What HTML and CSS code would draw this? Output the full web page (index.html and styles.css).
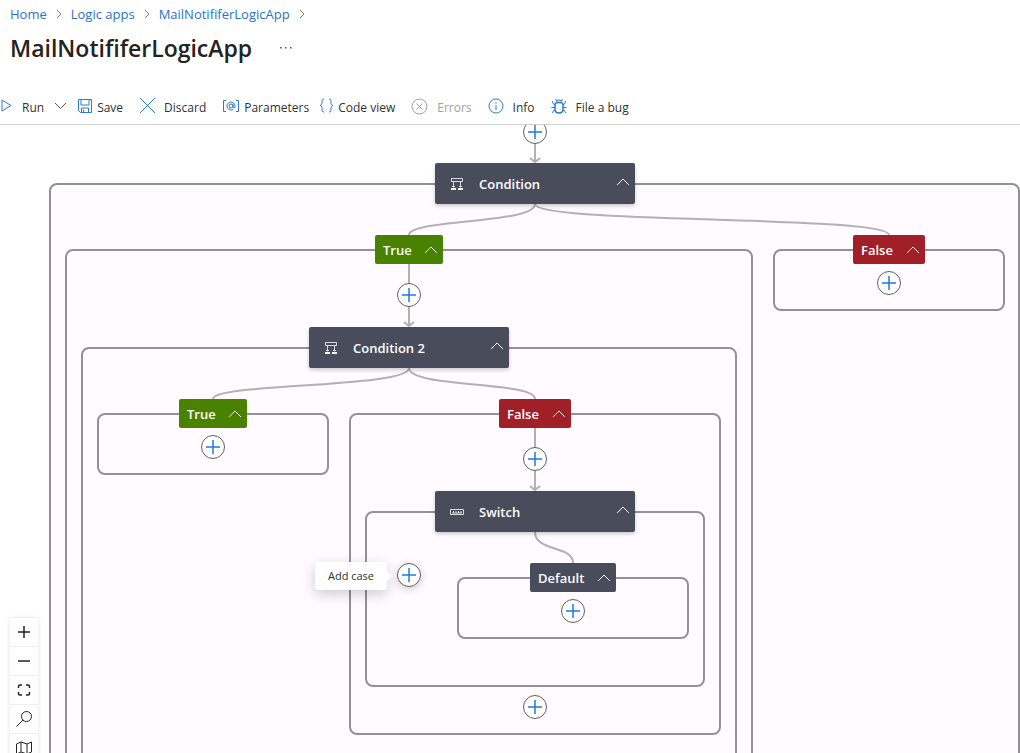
FILE: index.html
```html
<!DOCTYPE html>
<html lang="en">
<head>
<meta charset="utf-8">
<title>MailNotififerLogicApp</title>
<link rel="stylesheet" href="styles.css">
</head>
<body>
<svg class="defs" aria-hidden="true">
  <symbol id="crumb" viewBox="0 0 6 10"><path d="M1 1l4 4-4 4"/></symbol>
  <symbol id="up" viewBox="0 0 14 8"><path d="M1 7l6-6 6 6"/></symbol>
  <symbol id="plus" viewBox="0 0 14 14"><path d="M7 0v14M0 7h14"/></symbol>
  <symbol id="branch" viewBox="0 0 14 14"><path d="M1.500 1.500h11v3h-11zM3.500 4.500v6M10.500 4.500v6M2 9.500h3M9 9.500h3"/><path class="solid" d="M1 11h5v2H1zM8 11h5v2H8z"/></symbol>
</svg>
<header class="header">
  <nav class="crumbs" aria-label="Breadcrumb">
    <a href="#">Home</a><svg class="sep"><use href="#crumb"/></svg>
    <a href="#">Logic apps</a><svg class="sep"><use href="#crumb"/></svg>
    <a href="#">MailNotififerLogicApp</a><svg class="sep"><use href="#crumb"/></svg>
  </nav>
  <div class="title-row">
    <h1>MailNotififerLogicApp</h1>
    <button class="more" aria-label="More"><svg width="12" height="2" viewBox="0 0 12 2"><path d="M0 0h1.500v1.500H0zM5 0h1.500v1.500H5zM10 0h1.500v1.500H10z"/></svg></button>
  </div>
</header>
<div class="toolbar" role="toolbar">
  <button class="tool wide"><svg width="12" height="16" viewBox="0 0 12 16"><path d="M2 2v11l9-5.500z"/></svg>Run<svg class="chev" width="13" height="16" viewBox="0 0 13 16"><path d="M1 5l5.500 5.500L12 5"/></svg></button>
  <button class="tool tight near"><svg width="16" height="16" viewBox="0 0 16 16"><path d="M1.500 1.500h13v13h-11l-2-2zM4 1.500v5.500h8V1.500M4.500 14.500V10h7v4.500M6.500 11.500v3"/></svg>Save</button>
  <button class="tool"><svg width="16" height="16" viewBox="0 0 16 16"><path d="M1 0l15 15M16 0L1 15"/></svg>Discard</button>
  <button class="tool tight"><svg width="18" height="16" viewBox="0 0 18 16"><path d="M4 2.500H1.500v11H4M14 2.500h2.500v11H14"/><circle cx="9" cy="8" r="2"/><path d="M11 6v3c0 1.500 2 1.500 2-1A4 4 0 1 0 11 11.500"/></svg>Parameters</button>
  <button class="tool tight near"><svg width="15" height="16" viewBox="0 0 15 16"><path d="M5 1C3 1 3 2 3 4s0 3-2 3.500c2 .5 2 1.500 2 3.500s0 3 2 3M10 1c2 0 2 1 2 3s0 3 2 3.500c-2 .5-2 1.500-2 3.500s0 3-2 3"/></svg>Code view</button>
  <button class="tool" disabled><svg width="17" height="17" viewBox="0 0 17 17"><circle cx="8.500" cy="8.500" r="7.500"/><path d="M5.500 5.500l6 6M11.500 5.500l-6 6"/></svg>Errors</button>
  <button class="tool"><svg width="16" height="16" viewBox="0 0 16 16"><circle cx="8" cy="8" r="7"/><path d="M8 7v5M8 4v1.500"/></svg>Info</button>
  <button class="tool"><svg width="16" height="16" viewBox="0 0 16 16"><path class="heavy" d="M4 6.500Q4 4.500 8 4.500t4 2V11q0 4-4 4t-4-4z"/><path d="M5.500 4.500a2.500 2.500 0 0 1 5 0M4.500 1l1.500 2M11.500 1L10 3M4 7Q1.500 6.500 1.500 3M12 7q2.500-.5 2.500-4M4 9.500H.5M12 9.500h3.500M4 12q-2 0-2.500 3M12 12q2 0 2.500 3"/></svg>File a bug</button>
</div>
<main class="canvas">
  <div class="group g-root"></div>
  <div class="group g-true"></div>
  <div class="group g-false"></div>
  <div class="group g-cond2"></div>
  <div class="group g-true2"></div>
  <div class="group g-false2"></div>
  <div class="group g-switch"></div>
  <div class="group g-default"></div>
  <svg class="edges" width="1020" height="628" viewBox="0 0 1020 628" aria-hidden="true">
    <path d="M535 0v37M409 139v62M535 303v62"/>
    <path d="M530 33l5 4 5-4M404 197l5 4 5-4M530 361l5 4 5-4"/>
    <path d="M535 79C535 99 409 94 409 110M535 79C535 99 889 90 889 110"/>
    <path d="M409 243C409 263 213 258 213 274M409 243C409 263 535 256 535 274"/>
    <path d="M535 407C535 427 573 420 573 438"/>
  </svg>

  <button class="add a1" aria-label="Add action"><svg><use href="#plus"/></svg></button>
  <button class="add a2" aria-label="Add action"><svg><use href="#plus"/></svg></button>
  <button class="add a3" aria-label="Add action"><svg><use href="#plus"/></svg></button>
  <button class="add a4" aria-label="Add action"><svg><use href="#plus"/></svg></button>
  <button class="add a5" aria-label="Add action"><svg><use href="#plus"/></svg></button>
  <button class="add a6" aria-label="Add case"><svg><use href="#plus"/></svg></button>
  <button class="add a7" aria-label="Add action"><svg><use href="#plus"/></svg></button>
  <button class="add a8" aria-label="Add action"><svg><use href="#plus"/></svg></button>

  <div class="card c-cond"><svg class="kind"><use href="#branch"/></svg><span>Condition</span><button class="fold" aria-label="Collapse Condition"><svg class="up"><use href="#up"/></svg></button></div>
  <div class="card c-cond2"><svg class="kind"><use href="#branch"/></svg><span>Condition 2</span><button class="fold" aria-label="Collapse Condition 2"><svg class="up"><use href="#up"/></svg></button></div>
  <div class="card c-switch"><svg class="kind" viewBox="0 0 14 14"><path d="M.5 4.500h13v5H.5zM3.500 6v2M6 6v2M8.500 6v2M11 6v2M2 8h10"/></svg><span>Switch</span><button class="fold" aria-label="Collapse Switch"><svg class="up"><use href="#up"/></svg></button></div>

  <button class="label yes l-true">True<svg class="up"><use href="#up"/></svg></button>
  <button class="label no l-false">False<svg class="up"><use href="#up"/></svg></button>
  <button class="label yes l-true2">True<svg class="up"><use href="#up"/></svg></button>
  <button class="label no l-false2">False<svg class="up"><use href="#up"/></svg></button>
  <button class="label l-default">Default<svg class="up"><use href="#up"/></svg></button>

  <div class="tooltip" role="tooltip">Add case</div>

  <div class="controls">
    <button aria-label="Zoom in"><svg viewBox="0 0 16 16"><path class="bold" d="M8 2v12M2 8h12"/></svg></button>
    <button aria-label="Zoom out"><svg viewBox="0 0 16 16"><path class="bold" d="M2 8h12"/></svg></button>
    <button aria-label="Fit view"><svg viewBox="0 0 16 16"><path class="bold" d="M2.500 6V4.500Q2.500 3 4 3h2M10 3h2q1.500 0 1.500 1.500V6M13.500 10v1.500q0 1.500-1.500 1.500H10M6 13H4q-1.500 0-1.500-1.500V10"/></svg></button>
    <button aria-label="Search"><svg viewBox="0 0 16 16"><circle cx="10.500" cy="5.500" r="5"/><path d="M7 9l-6.500 6.500"/></svg></button>
    <button aria-label="Minimap"><svg viewBox="0 0 16 16"><path d="M.5 4L5 2l6 2 4.500-2v10L11 14l-6-2-4.500 2zM5 2v10M11 4v10"/></svg></button>
  </div>
</main>
</body>
</html>
```
FILE: styles.css
```css
* { box-sizing: border-box; }
body {
  margin: 0;
  height: 100vh;
  display: flex;
  flex-direction: column;
  overflow: hidden;
  background: #fff;
  color: #323130;
  font: 12px/20px "Open Sans", "Noto Sans", sans-serif;
}
button { margin: 0; padding: 0; border: 0; background: none; color: inherit; font: inherit; cursor: pointer; }
svg { fill: none; flex: none; }
.defs { position: absolute; width: 0; height: 0; }

.header { padding: 4px 10px 0; }
.crumbs { display: flex; align-items: center; gap: 9px; font-size: 13px; }
.crumbs a { color: #2b72c4; text-decoration: none; }
.sep { width: 6px; height: 10px; stroke: #777; }
.title-row { display: flex; align-items: center; gap: 28px; height: 47px; }
h1 { margin: 0; font-size: 23px; line-height: 32px; font-weight: 600; color: #242322; }
.more { display: flex; padding: 4px 0; }
.more svg { fill: #555; }

.toolbar { display: flex; align-items: center; gap: 16px; height: 54px; padding-top: 20px; border-bottom: 1px solid #d2d0ce; white-space: nowrap; }
.tool { display: flex; align-items: center; gap: 9px; }
.tool svg { stroke: #2f78d0; margin-bottom: 3px; }
.tool .chev { stroke: #555; }
.tool .heavy { stroke-width: 1.500; }
.wide { gap: 10px; }
.tight { gap: 4px; }
.near { margin-left: -6px; }
.tool:disabled { color: #a19f9d; }
.tool:disabled svg { stroke: #a19f9d; }

.canvas { position: relative; flex: 1; min-height: 0; overflow: hidden; }
.group { position: absolute; border: 2px solid #949196; border-radius: 8px; background: #fffbff; }
.g-root { left: 49px; top: 58px; width: 971px; height: 700px; }
.g-true { left: 65px; top: 124px; width: 688px; height: 600px; }
.g-false { left: 773px; top: 124px; width: 232px; height: 62px; }
.g-cond2 { left: 81px; top: 222px; width: 656px; height: 480px; }
.g-true2 { left: 97px; top: 288px; width: 232px; height: 62px; }
.g-false2 { left: 349px; top: 288px; width: 372px; height: 322px; }
.g-switch { left: 365px; top: 386px; width: 340px; height: 176px; }
.g-default { left: 457px; top: 452px; width: 232px; height: 62px; }
.edges { position: absolute; left: 0; top: 0; stroke: #b3afb5; stroke-width: 2; }

.add { position: absolute; display: grid; place-items: center; width: 24px; height: 24px; border: 1px solid #605e5c; border-radius: 50%; background: #fff; }
.add svg { width: 14px; height: 14px; stroke: #1f7bdc; stroke-width: 1.500; }
.a1 { left: 523px; top: -5px; }
.a2 { left: 397px; top: 158px; }
.a3 { left: 877px; top: 146px; }
.a4 { left: 201px; top: 310px; }
.a5 { left: 523px; top: 322px; }
.a6 { left: 397px; top: 438px; box-shadow: 0 2px 8px #0003; }
.a7 { left: 561px; top: 474px; }
.a8 { left: 523px; top: 570px; }

.card { position: absolute; display: flex; align-items: center; gap: 15px; width: 200px; height: 41px; padding-left: 15px; border-radius: 2px; background: #484c5b; color: #fff; font-size: 13px; font-weight: 600; box-shadow: 0 2px 4px #0003; }
.kind { width: 14px; height: 14px; stroke: #d8d9de; }
.solid { fill: #fff; stroke: none; }
.fold { display: flex; margin-left: auto; padding: 4px 5px 8px; }
.up { width: 14px; height: 8px; stroke: #fff; stroke-width: 1; }
.c-cond { left: 435px; top: 38px; }
.c-cond2 { left: 309px; top: 202px; }
.c-switch { left: 435px; top: 366px; }

.label { position: absolute; display: flex; align-items: center; justify-content: space-between; height: 29px; padding: 0 5px 0 8px; border-radius: 2px; background: #484c5b; color: #fff; font-size: 13px; font-weight: 600; }
.yes { width: 68px; background: #488200; }
.no { width: 72px; background: #a12027; }
.l-true { left: 375px; top: 110px; }
.l-false { left: 853px; top: 110px; }
.l-true2 { left: 179px; top: 274px; }
.l-false2 { left: 499px; top: 274px; }
.l-default { left: 530px; top: 438px; width: 86px; }

.tooltip { position: absolute; left: 315px; top: 437px; width: 72px; padding: 4px 0; border-radius: 3px; background: #fff; text-align: center; font-size: 11px; box-shadow: 0 4px 14px #0003; }
.tooltip::after { content: ""; position: absolute; right: -5px; top: 9px; border: 5px solid transparent; border-left-color: #fff; border-right: 0; }

.controls { position: absolute; left: 10px; bottom: -10px; display: flex; flex-direction: column; width: 28px; background: #fff; box-shadow: 0 0 4px #0002; }
.controls button { display: grid; place-items: center; height: 29px; border-bottom: 1px solid #eee; }
.controls svg { width: 16px; height: 16px; stroke: #222; stroke-width: 1; }
.controls .bold { stroke-width: 1.500; }
```
